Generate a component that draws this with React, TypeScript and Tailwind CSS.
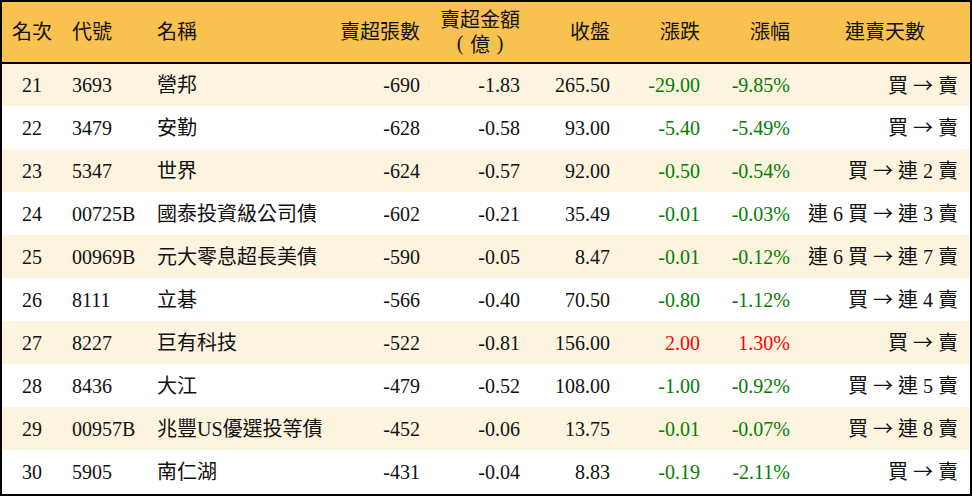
import React from "react";

type Row = {
  rank: string;
  code: string;
  name: React.ReactNode;
  vol: string;
  amt: string;
  close: string;
  chg: string;
  pct: string;
  streak: string;
  up?: boolean;
};

const serif = '"Liberation Serif", serif';
const cjk = '"Noto Sans CJK TC", sans-serif';

const rows: Row[] = [
  { rank: "21", code: "3693", name: "營邦", vol: "-690", amt: "-1.83", close: "265.50", chg: "-29.00", pct: "-9.85%", streak: "買 → 賣" },
  { rank: "22", code: "3479", name: "安勤", vol: "-628", amt: "-0.58", close: "93.00", chg: "-5.40", pct: "-5.49%", streak: "買 → 賣" },
  { rank: "23", code: "5347", name: "世界", vol: "-624", amt: "-0.57", close: "92.00", chg: "-0.50", pct: "-0.54%", streak: "買 → 連 2 賣" },
  { rank: "24", code: "00725B", name: "國泰投資級公司債", vol: "-602", amt: "-0.21", close: "35.49", chg: "-0.01", pct: "-0.03%", streak: "連 6 買 → 連 3 賣" },
  { rank: "25", code: "00969B", name: "元大零息超長美債", vol: "-590", amt: "-0.05", close: "8.47", chg: "-0.01", pct: "-0.12%", streak: "連 6 買 → 連 7 賣" },
  { rank: "26", code: "8111", name: "立碁", vol: "-566", amt: "-0.40", close: "70.50", chg: "-0.80", pct: "-1.12%", streak: "買 → 連 4 賣" },
  { rank: "27", code: "8227", name: "巨有科技", vol: "-522", amt: "-0.81", close: "156.00", chg: "2.00", pct: "1.30%", streak: "買 → 賣", up: true },
  { rank: "28", code: "8436", name: "大江", vol: "-479", amt: "-0.52", close: "108.00", chg: "-1.00", pct: "-0.92%", streak: "買 → 連 5 賣" },
  {
    rank: "29",
    code: "00957B",
    name: (
      <>
        兆豐<span style={{ fontFamily: serif }}>US</span>優選投等債
      </>
    ),
    vol: "-452",
    amt: "-0.06",
    close: "13.75",
    chg: "-0.01",
    pct: "-0.07%",
    streak: "買 → 連 8 賣",
  },
  { rank: "30", code: "5905", name: "南仁湖", vol: "-431", amt: "-0.04", close: "8.83", chg: "-0.19", pct: "-2.11%", streak: "買 → 賣" },
];

function Streak({ text }: { text: string }) {
  const parts = text.split("→");
  return (
    <>
      {parts[0]}
      <span className="inline-block w-[20px] text-center" style={{ fontFamily: cjk }}>
        →
      </span>
      {parts[1]}
    </>
  );
}

export default function App() {
  return (
    <div
      className="w-[972px] h-[496px] bg-white text-[#111] text-[20px]"
      style={{ fontFamily: '"Liberation Serif", "Noto Sans CJK TC", serif' }}
    >
      <div className="w-[972px] h-[496px] border-2 border-black overflow-hidden">
        <table className="table-fixed border-collapse w-[968px]">
          <colgroup>
            <col className="w-[60px]" />
            <col className="w-[85px]" />
            <col className="w-[183px]" />
            <col className="w-[100px]" />
            <col className="w-[100px]" />
            <col className="w-[90px]" />
            <col className="w-[90px]" />
            <col className="w-[90px]" />
            <col className="w-[170px]" />
          </colgroup>
          <thead>
            <tr className="h-[61px] bg-[#f8c150] border-b-2 border-black">
              <th className="font-normal text-center p-0">名次</th>
              <th className="font-normal text-left pl-[10px]">代號</th>
              <th className="font-normal text-left pl-[10px]">名稱</th>
              <th className="font-normal text-right pr-[10px]">賣超張數</th>
              <th className="font-normal text-right pr-[10px]">
                <span className="inline-block text-center leading-[23px] pt-[2px]">
                  賣超金額
                  <br />
                  <span className="inline-flex">
                    <span className="inline-block w-[20px] text-center" style={{ fontFamily: serif }}>(</span>
                    <span className="inline-block w-[20px] text-center" style={{ fontFamily: cjk }}>億</span>
                    <span className="inline-block w-[20px] text-center" style={{ fontFamily: serif }}>)</span>
                  </span>
                </span>
              </th>
              <th className="font-normal text-right pr-[10px]">收盤</th>
              <th className="font-normal text-right pr-[10px]">漲跌</th>
              <th className="font-normal text-right pr-[10px]">漲幅</th>
              <th className="font-normal text-center">連賣天數</th>
            </tr>
          </thead>
          <tbody>
            {rows.map((r, i) => {
              const color = r.up ? "text-[#ff0000]" : "text-[#008000]";
              return (
                <tr key={r.rank} className={`h-[43px] ${i % 2 === 0 ? "bg-[#fdf4e0]" : "bg-white"}`}>
                  <td className="text-center p-0">{r.rank}</td>
                  <td className="text-left pl-[10px]">{r.code}</td>
                  <td className="text-left pl-[10px] whitespace-nowrap">{r.name}</td>
                  <td className="text-right pr-[10px]">{r.vol}</td>
                  <td className="text-right pr-[10px]">{r.amt}</td>
                  <td className="text-right pr-[10px]">{r.close}</td>
                  <td className={`text-right pr-[10px] ${color}`}>{r.chg}</td>
                  <td className={`text-right pr-[10px] ${color}`}>{r.pct}</td>
                  <td className="text-right pr-[12px] whitespace-nowrap">
                    <Streak text={r.streak} />
                  </td>
                </tr>
              );
            })}
          </tbody>
        </table>
      </div>
    </div>
  );
}
